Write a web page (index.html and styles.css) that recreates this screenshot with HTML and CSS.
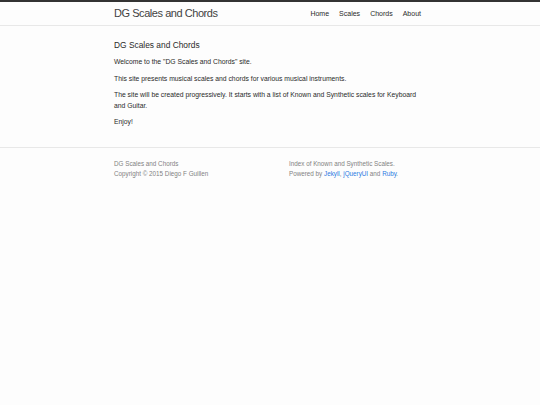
FILE: index.html
```html
<!DOCTYPE html>
<html lang="en">
<head>
<meta charset="utf-8">
<title>DG Scales and Chords</title>
<link rel="stylesheet" href="styles.css">
</head>
<body>
<header class="site-header">
  <div class="wrapper header-inner">
    <a class="site-title" href="#">DG Scales and Chords</a>
    <nav class="site-nav">
      <a href="#">Home</a>
      <a href="#">Scales</a>
      <a href="#">Chords</a>
      <a href="#">About</a>
    </nav>
  </div>
</header>
<main class="page-content">
  <div class="wrapper">
    <h2 class="page-heading">DG Scales and Chords</h2>
    <p>Welcome to the "DG Scales and Chords" site.</p>
    <p>This site presents musical scales and chords for various musical instruments.</p>
    <p>The site will be created progressively. It starts with a list of Known and Synthetic scales for Keyboard and Guitar.</p>
    <p>Enjoy!</p>
  </div>
</main>
<footer class="site-footer">
  <div class="wrapper footer-cols">
    <div class="footer-col footer-col-1">
      <div>DG Scales and Chords</div>
      <div>Copyright © 2015 Diego F Guillen</div>
    </div>
    <div class="footer-col footer-col-2">
      <div>Index of Known and Synthetic Scales.</div>
      <div>Powered by <a href="#">Jekyll</a>, <a href="#">jQueryUI</a> and <a href="#">Ruby</a>.</div>
    </div>
  </div>
</footer>
</body>
</html>
```
FILE: styles.css
```css
html, body {
  margin: 0;
  padding: 0;
  background: #fdfdfd;
  font-family: "Liberation Sans", Arial, Helvetica, sans-serif;
  color: #2a2a2a;
}
body {
  min-height: 405px;
}
a {
  text-decoration: none;
}
.wrapper {
  width: 312px;
  margin: 0 auto;
}
.site-header {
  border-top: 2px solid #333333;
  border-bottom: 1px solid #e8e8e8;
  background: #fdfdfd;
}
.header-inner {
  display: flex;
  justify-content: space-between;
  align-items: center;
  height: 23px;
}
.site-title {
  font-size: 11px;
  letter-spacing: -0.45px;
  color: #424242;
  line-height: 23px;
}
.site-nav {
  display: flex;
  gap: 10px;
  padding-right: 5px;
  font-size: 7px;
  line-height: 23px;
}
.site-nav a {
  color: #2a2a2a;
}
.page-content {
  padding: 13px 0;
}
.page-heading {
  margin: 0 0 6px;
  font-size: 8.4px;
  font-weight: normal;
  line-height: 12px;
  color: #2a2a2a;
}
.page-content p {
  margin: 0 0 6px;
  font-size: 6.8px;
  line-height: 10.5px;
}
.site-footer {
  border-top: 1px solid #e8e8e8;
  padding: 11.5px 0 12px;
}
.footer-cols {
  display: flex;
  font-size: 6.3px;
  line-height: 10px;
  color: #828282;
}
.footer-col-1 {
  width: 175px;
}
.footer-col-2 {
  flex: 1;
}
.footer-col a {
  color: #2a7ae2;
}
```
